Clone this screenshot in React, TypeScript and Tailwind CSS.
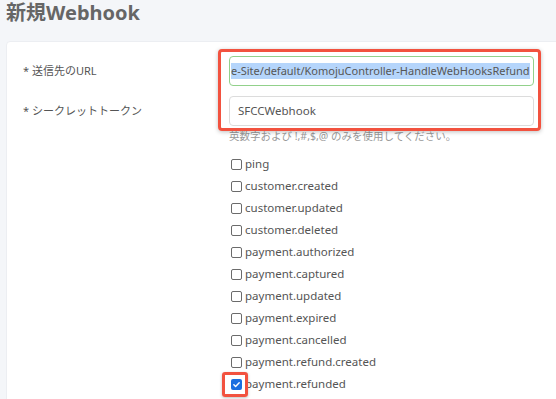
const events = [
  "ping",
  "customer.created",
  "customer.updated",
  "customer.deleted",
  "payment.authorized",
  "payment.captured",
  "payment.updated",
  "payment.expired",
  "payment.cancelled",
  "payment.refund.created",
  "payment.refunded",
];

const font = { fontFamily: '"Noto Sans", "Noto Sans CJK JP", sans-serif' };

const Checkbox = ({ checked }: { checked: boolean }) =>
  checked ? (
    <span className="relative flex h-[11px] w-[11px] items-center justify-center rounded-[2px] bg-[#1a6fe0]">
      <svg viewBox="0 0 12 12" className="h-[9px] w-[9px]">
        <path d="M2.5 6.3l2.3 2.3 4.8-5" fill="none" stroke="white" strokeWidth="1.9" strokeLinecap="round" strokeLinejoin="round" />
      </svg>
      <span className="absolute left-[-9px] top-[-7px] h-[25px] w-[26px] rounded-[3px] border-[3px] border-[#f2523f] shadow-[0_1px_3px_rgba(0,0,0,0.25)]" />
    </span>
  ) : (
    <span className="h-[11px] w-[11px] rounded-[2px] border border-[#6b6b6b] bg-white" />
  );

const App = () => {
  return (
    <div className="h-[399px] w-[556px] overflow-hidden bg-[#f4f6f9] pl-[6px]" style={font}>
      <h1 className="text-[20px] font-bold leading-[26px] text-[#666]">新規Webhook</h1>
      <div className="mt-[15px] w-[600px] rounded-tl-[4px] border border-[#eceef2] bg-white pl-[16px] pt-[14px] pb-6">
        <div className="grid grid-cols-[206px_305px] gap-y-[10px] text-[11px] text-[#555]">
          <div className="flex h-[30px] items-center">* 送信先のURL</div>
          <div className="relative">
            <div className="flex h-[30px] items-center overflow-hidden rounded-[4px] border border-[#92d18b] px-[1px]">
              <span className="whitespace-nowrap bg-[#b5d5fb] text-[11px] text-[#555]">
                e-Site/default/KomojuController-HandleWebHooksRefund
              </span>
            </div>
            <div className="pointer-events-none absolute left-[-11px] top-[-7px] h-[82px] w-[323px] rounded-[4px] border-[3px] border-[#f2523f] shadow-[0_1px_4px_rgba(0,0,0,0.25)]" />
          </div>
          <div className="flex h-[30px] items-center">* シークレットトークン</div>
          <div>
            <div className="flex h-[30px] items-center rounded-[4px] border border-[#dcdcdc] px-[8px] text-[11.5px] text-[#555]">
              SFCCWebhook
            </div>
            <p className="mt-[3px] text-[10.5px] leading-[14px] text-[#999]">
              英数字および !,#,$,@ のみを使用してください。
            </p>
            <ul className="mt-[10px] flex flex-col">
              {events.map((e, i) => (
                <li key={e} className="flex h-[22px] items-center gap-[3px] pl-[2px] text-[11.5px] text-[#555]">
                  <Checkbox checked={i === events.length - 1} />
                  <span>{e}</span>
                </li>
              ))}
            </ul>
          </div>
        </div>
      </div>
    </div>
  );
};

export default App;
